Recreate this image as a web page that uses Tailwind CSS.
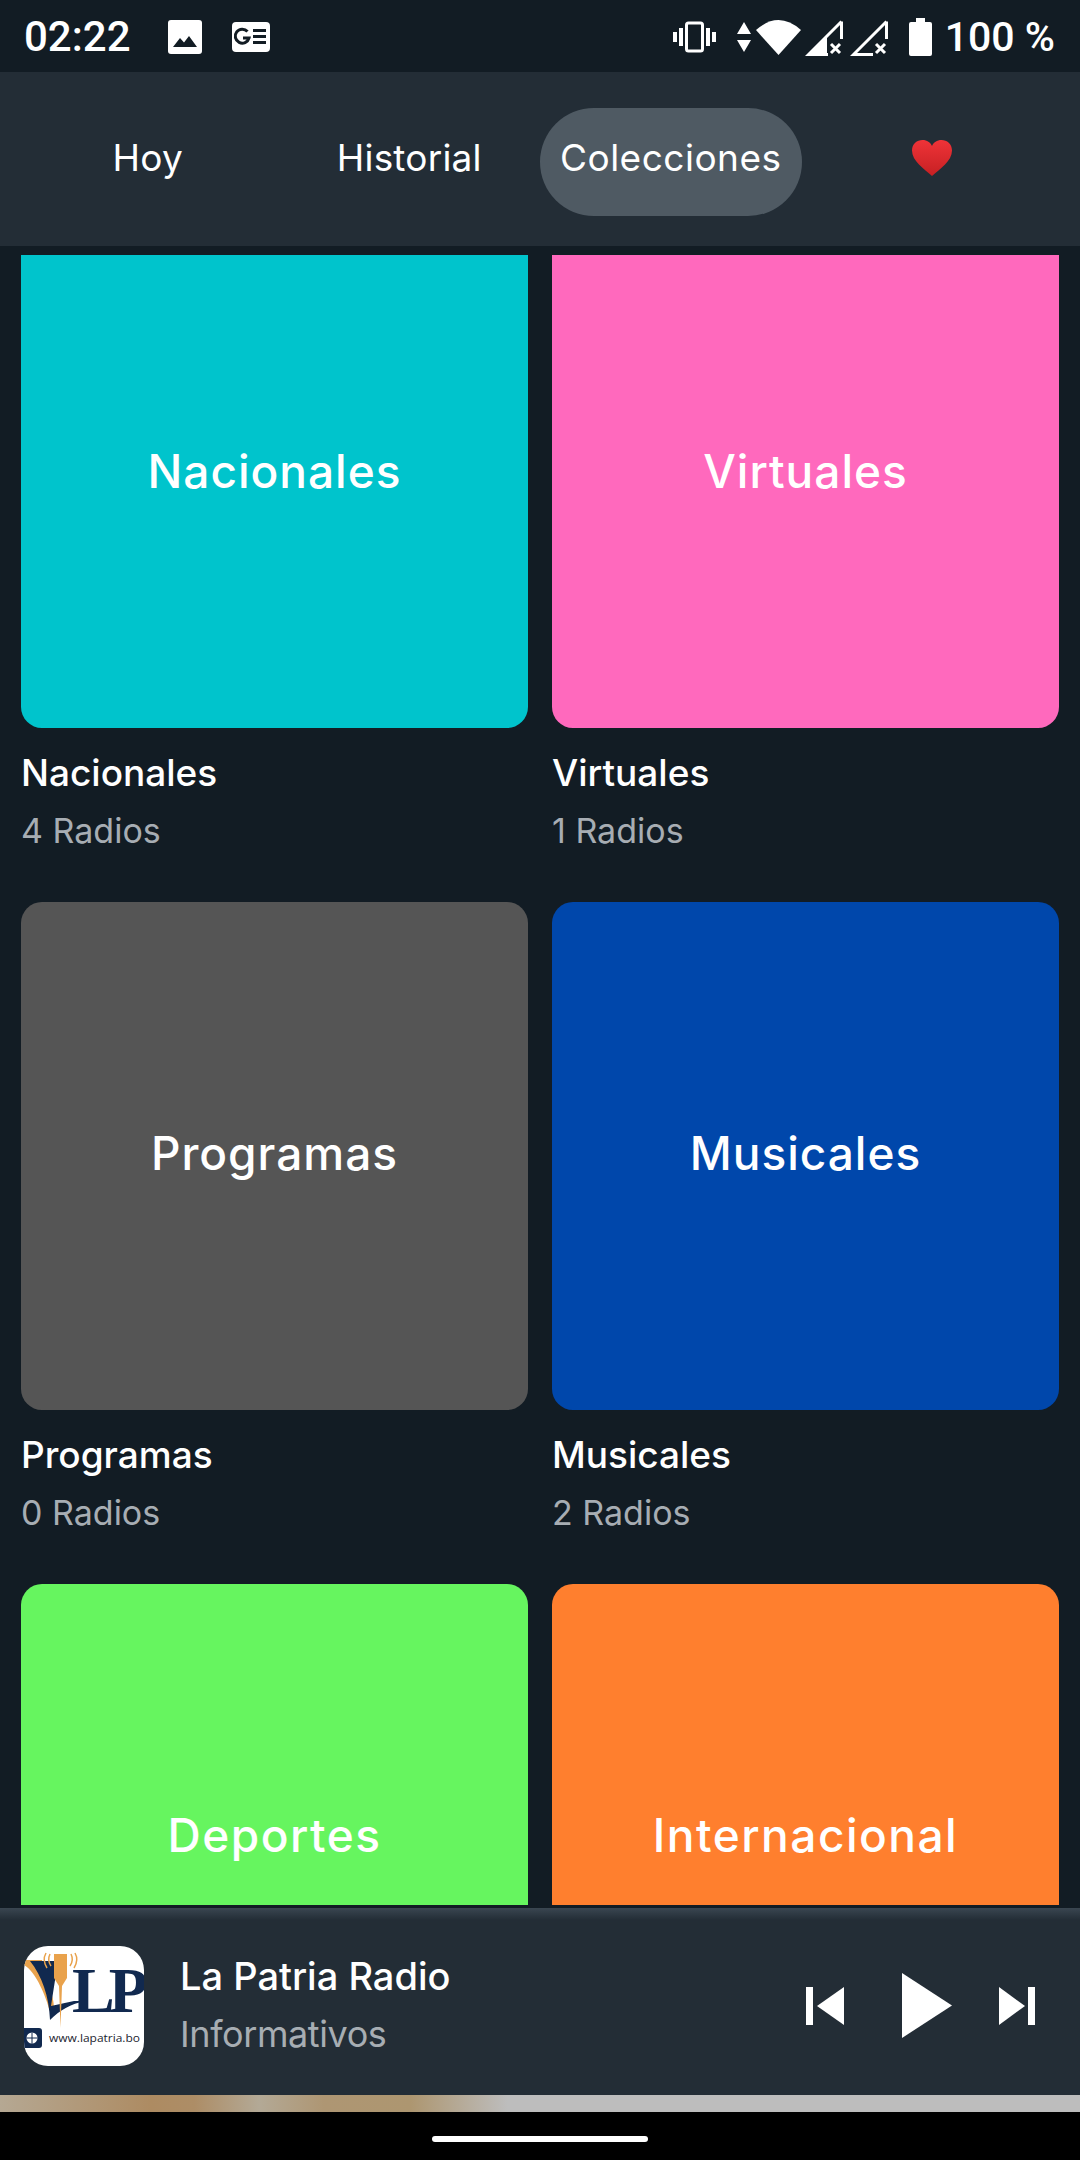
<!DOCTYPE html>
<html lang="es">
<head>
  <meta charset="UTF-8">
  <meta name="viewport" content="width=device-width, initial-scale=1.0">
  <title>La Patria Radio</title>
  <script src="https://cdn.jsdelivr.net/npm/@tailwindcss/browser@4"></script>
</head>
<body class="bg-[#121c24]">
  <div class="w-[1080px] h-[2160px] flex flex-col overflow-hidden font-['Inter','Noto_Sans',sans-serif] text-white">

    <!-- status bar -->
    <div class="h-[72px] shrink-0 bg-[#121c24] flex items-center pl-[24px] pr-[25px] pt-[2px] font-['Roboto',sans-serif]">
      <span class="text-[42px] font-medium leading-none w-[106px]">02:22</span>
      <svg class="ml-[38px]" width="34" height="34" viewBox="0 0 34 34"><rect width="34" height="34" rx="3" fill="#fff"/><path d="M5 27 L12 18 L16 22.5 L21 16 L29 27Z" fill="#121c24"/></svg>
      <svg class="ml-[30px]" width="38" height="30" viewBox="0 0 38 30"><rect width="38" height="30" rx="4" fill="#fff"/><path d="M15.5 9.5 A7 7 0 1 0 17 16 L11 16" fill="none" stroke="#121c24" stroke-width="3"/><path d="M21 8.5h13M21 14.5h13M21 20.5h13" stroke="#121c24" stroke-width="3"/></svg>
      <div class="ml-auto flex items-center">
        <svg width="43" height="32" viewBox="0 0 43 32" fill="none" stroke="#fff"><rect x="13.5" y="2" width="16" height="28" rx="2" stroke-width="3"/><path d="M8 7v18M35 7v18" stroke-width="4"/><path d="M2 11v10M41 11v10" stroke-width="4"/></svg>
        <svg class="ml-[21px]" width="14" height="32" viewBox="0 0 14 32" fill="#fff"><path d="M7 1 L14 13H0Z M7 31 L0 19H14Z"/></svg>
        <svg class="ml-[5px]" width="45" height="38" viewBox="0 0 45 38" fill="#fff"><path d="M22.5 37 L0 12 Q22.5 -8 45 12Z"/></svg>
        <svg class="ml-[4px]" width="38" height="38" viewBox="0 0 38 38" fill="none"><path d="M36.500 3.500V21M23 36.500H3.500L36.500 3.500" stroke="#fff" stroke-width="3"/><path d="M2 38 L22 18 V38Z" fill="#fff"/><path d="M26 26l9 9M35 26l-9 9" stroke="#fff" stroke-width="3"/></svg>
        <svg class="ml-[7px]" width="38" height="38" viewBox="0 0 38 38" fill="none"><path d="M36.500 3.500V21M23 36.500H3.500L36.500 3.500" stroke="#fff" stroke-width="3"/><path d="M26 26l9 9M35 26l-9 9" stroke="#fff" stroke-width="3"/></svg>
        <svg class="ml-[21px]" width="23" height="38" viewBox="0 0 23 38" fill="#fff"><path d="M7 0h9v4h5a2 2 0 0 1 2 2v30a2 2 0 0 1-2 2H2a2 2 0 0 1-2-2V6a2 2 0 0 1 2-2h5Z"/></svg>
        <span class="ml-[13px] text-[41px] font-medium leading-none">100 %</span>
      </div>
    </div>

    <!-- tabs -->
    <div class="h-[174px] shrink-0 bg-[#232d36] px-[17px] pt-[36px] grid grid-cols-4">
      <div class="h-[108px] flex items-center justify-center pb-[8px] text-[37px] tracking-[0.2px]">Hoy</div>
      <div class="h-[108px] flex items-center justify-center pb-[8px] text-[37px] tracking-[0.2px]">Historial</div>
      <div class="h-[108px] flex items-center justify-center pb-[8px] text-[37px] tracking-[0.5px] bg-[#4f5a63] rounded-full">Colecciones</div>
      <div class="h-[108px] flex items-center justify-center pb-[8px]">
        <svg width="40" height="36" viewBox="0 0 40 36"><defs><linearGradient id="heart" x1="0" y1="0" x2="0" y2="1"><stop offset="0" stop-color="#ef3338"/><stop offset="1" stop-color="#c62023"/></linearGradient></defs><path d="M20 36 C12 29 0 21 0 10.500 C0 4 5 0 10.500 0 C15 0 18.500 2.500 20 6 C21.500 2.500 25 0 29.500 0 C35 0 40 4 40 10.500 C40 21 28 29 20 36Z" fill="url(#heart)"/></svg>
      </div>
    </div>

    <!-- collections -->
    <div class="flex-1 min-h-0 pt-[9px] pb-[3px] bg-[#121c24]">
      <div class="h-full overflow-hidden">
        <div class="-mt-[35px] px-[21px] grid grid-cols-[507px_507px] gap-x-[24px]">

          <div class="h-[682px]">
            <div class="h-[508px] rounded-[21px] bg-[#00c4cc] flex items-center justify-center text-[46px] font-medium pb-[6px] tracking-[1px]">Nacionales</div>
            <p class="mt-[24px] text-[37px] leading-[42px] font-medium">Nacionales</p>
            <p class="mt-[16px] text-[34px] leading-[42px] text-[#a7adb3]">4 Radios</p>
          </div>
          <div class="h-[682px]">
            <div class="h-[508px] rounded-[21px] bg-[#ff69bd] flex items-center justify-center text-[46px] font-medium pb-[6px] tracking-[1px]">Virtuales</div>
            <p class="mt-[24px] text-[37px] leading-[42px] font-medium">Virtuales</p>
            <p class="mt-[16px] text-[34px] leading-[42px] text-[#a7adb3]">1 Radios</p>
          </div>

          <div class="h-[682px]">
            <div class="h-[508px] rounded-[21px] bg-[#555555] flex items-center justify-center text-[46px] font-medium pb-[6px] tracking-[1px]">Programas</div>
            <p class="mt-[24px] text-[37px] leading-[42px] font-medium">Programas</p>
            <p class="mt-[16px] text-[34px] leading-[42px] text-[#a7adb3]">0 Radios</p>
          </div>
          <div class="h-[682px]">
            <div class="h-[508px] rounded-[21px] bg-[#0047ab] flex items-center justify-center text-[46px] font-medium pb-[6px] tracking-[1px]">Musicales</div>
            <p class="mt-[24px] text-[37px] leading-[42px] font-medium">Musicales</p>
            <p class="mt-[16px] text-[34px] leading-[42px] text-[#a7adb3]">2 Radios</p>
          </div>

          <div class="h-[682px]">
            <div class="h-[508px] rounded-[21px] bg-[#66f55f] flex items-center justify-center text-[46px] font-medium pb-[6px] tracking-[1.500px]">Deportes</div>
          </div>
          <div class="h-[682px]">
            <div class="h-[508px] rounded-[21px] bg-[#ff7f2e] flex items-center justify-center text-[46px] font-medium pb-[6px] tracking-[1.500px]">Internacional</div>
          </div>
        </div>
      </div>
    </div>

    <!-- player -->
    <div class="h-[187px] shrink-0 bg-[#232d36]">
      <div class="h-[12px] bg-gradient-to-b from-[#3a4651] to-[#232d36]"></div>
      <div class="h-[175px] flex items-center pl-[24px] pb-[4px]">
        <svg class="w-[120px] h-[120px] rounded-[24px] bg-white shrink-0" viewBox="0 0 120 120">
          <path d="M0 14 L18 14 C24 40 30 50 30 62 L26 66 C22 50 12 26 0 19Z" fill="#e9a24c"/>
          <path d="M6 15 L34 15 L27 60 L50 55 L62 55 C46 58 36 64 26 74 C25 50 18 30 6 15Z" fill="#11294f"/>
          <path d="M30 8 L43 8 L43 32 L38 40 L36.500 82 L35 40 L30 32Z" fill="#e9a24c"/>
          <path d="M26 8 Q23 14 27 20 M47 8 Q50 14 46 20 M22 7 Q18 14 23 22 M51 7 Q55 14 50 22" fill="none" stroke="#e9a24c" stroke-width="1.500"/>
          <text x="48" y="66" font-family="Liberation Serif" font-weight="700" font-size="64" letter-spacing="-6" fill="#11294f">LP</text>
          <rect x="-5" y="82" width="23" height="20" rx="3" fill="#11294f"/>
          <circle cx="8" cy="92" r="5.500" fill="#fff"/>
          <path d="M2.500 92h11M8 86.500v11" stroke="#11294f" stroke-width="1"/>
          <text x="25" y="96" font-family="Open Sans" font-size="11.500" textLength="91" lengthAdjust="spacingAndGlyphs" fill="#1c2530">www.lapatria.bo</text>
        </svg>
        <div class="ml-[36px] -mt-[2px]">
          <p class="text-[38px] leading-[44px] font-medium">La Patria Radio</p>
          <p class="mt-[14px] text-[36px] leading-[44px] text-[#a7adb3] tracking-[-0.4px]">Informativos</p>
        </div>
        <div class="ml-auto flex items-center pr-[45px]">
          <svg width="38" height="38" viewBox="0 0 38 38" fill="#fff"><rect y="0" width="7" height="38"/><path d="M38 0V38L11 19Z"/></svg>
          <svg class="ml-[58px]" width="50" height="65" viewBox="0 0 50 65" fill="#fff"><path d="M0 0 L50 32.500 L0 65Z"/></svg>
          <svg class="ml-[47px]" width="36" height="38" viewBox="0 0 36 38" fill="#fff"><path d="M0 0V38L26 19Z"/><rect x="29" y="0" width="7" height="38"/></svg>
        </div>
      </div>
    </div>

    <!-- progress strip -->
    <div class="h-[17px] shrink-0 bg-[linear-gradient(90deg,#b5a893_0%,#ad8b62_14%,#ad8d66_18%,#b3a996_24%,#ae9673_30%,#ad9670_38%,#bdbdbd_47%,#bdbdbd_100%)]"></div>

    <!-- nav bar -->
    <div class="h-[48px] shrink-0 bg-black flex justify-center pt-[24px]">
      <div class="w-[216px] h-[6px] rounded-full bg-white"></div>
    </div>
  </div>
</body>
</html>
